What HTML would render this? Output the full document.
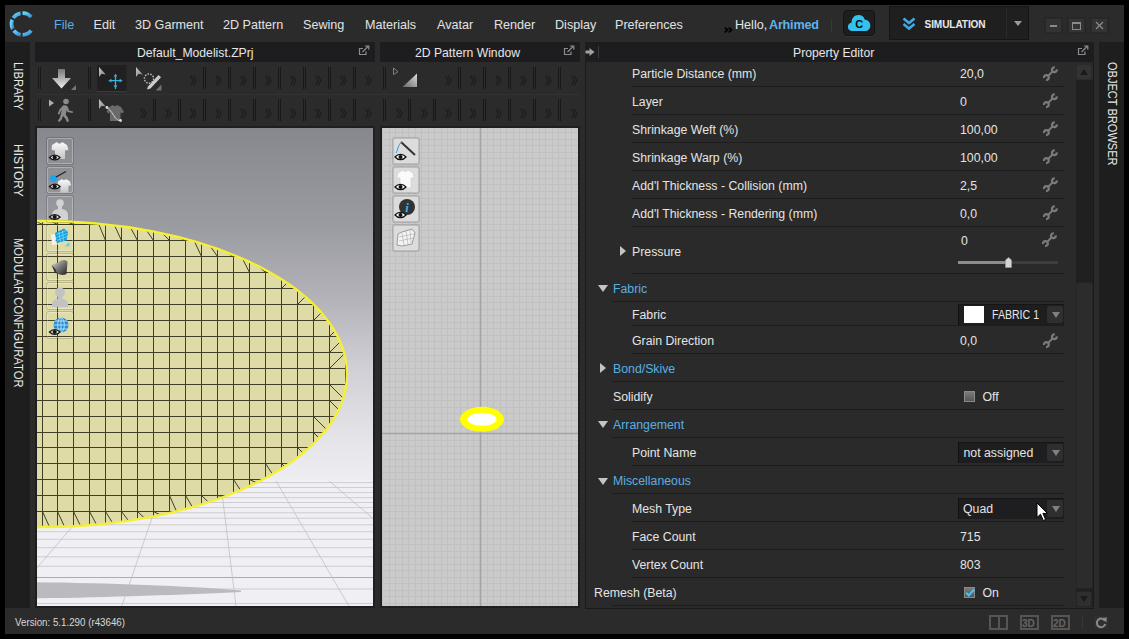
<!DOCTYPE html>
<html><head><meta charset="utf-8">
<style>
*{margin:0;padding:0;box-sizing:border-box}
html,body{width:1129px;height:639px;overflow:hidden;background:#000;font-family:"Liberation Sans",sans-serif;color:#e2e2e2;position:relative}
.a{position:absolute}
.t{white-space:nowrap;line-height:15px}
.vt{position:absolute;transform-origin:0 0;transform:rotate(90deg);font-size:13px;color:#e8e8e8;white-space:nowrap;line-height:14px}
svg{overflow:visible}
</style></head><body>
<div class="a" style="left:5px;top:5px;width:1119px;height:629px;background:#2b2b2b;"></div>
<svg class="a" style="left:9px;top:11px" width="26" height="26" viewBox="0 0 26 26">
<defs><linearGradient id="lg" x1="0" y1="0" x2="1" y2="1"><stop offset="0" stop-color="#6fd3f2"/><stop offset="1" stop-color="#2f8fd6"/></linearGradient></defs>
<g fill="none" stroke="url(#lg)" stroke-width="3.7">
<path d="M13.5 2.2 A10.8 10.8 0 0 1 22.2 6.2"/>
<path d="M11.6 2.3 A10.8 10.8 0 0 0 4.3 7"/>
<path d="M3.3 8.8 A10.8 10.8 0 0 0 3.8 18"/>
<path d="M4.9 19.6 A10.8 10.8 0 0 0 11.7 23.7"/>
<path d="M13.6 23.8 A10.8 10.8 0 0 0 22.2 19.6"/>
</g></svg>
<div class="a t" style="left:54px;top:18px;font-size:12.6px;color:#5aaee3;">File</div>
<div class="a t" style="left:93.5px;top:18px;font-size:12.6px;color:#e2e2e2;">Edit</div>
<div class="a t" style="left:135px;top:18px;font-size:12.6px;color:#e2e2e2;">3D Garment</div>
<div class="a t" style="left:223px;top:18px;font-size:12.6px;color:#e2e2e2;">2D Pattern</div>
<div class="a t" style="left:303px;top:18px;font-size:12.6px;color:#e2e2e2;">Sewing</div>
<div class="a t" style="left:365px;top:18px;font-size:12.6px;color:#e2e2e2;">Materials</div>
<div class="a t" style="left:437px;top:18px;font-size:12.6px;color:#e2e2e2;">Avatar</div>
<div class="a t" style="left:494px;top:18px;font-size:12.6px;color:#e2e2e2;">Render</div>
<div class="a t" style="left:555px;top:18px;font-size:12.6px;color:#e2e2e2;">Display</div>
<div class="a t" style="left:615px;top:18px;font-size:12.6px;color:#e2e2e2;">Preferences</div>
<svg class="a" style="left:724px;top:27px" width="9" height="6" viewBox="0 0 9 6"><path d="M0.8 0.6 L3.6 3 L0.8 5.4 M4.8 0.6 L7.6 3 L4.8 5.4" fill="none" stroke="#000" stroke-width="1.7"/></svg>
<div class="a t" style="left:735px;top:18px;font-size:12.6px;color:#e6e6e6;">Hello,</div>
<div class="a t" style="left:769px;top:18px;font-size:12.6px;color:#5fb3ea;font-weight:bold;letter-spacing:-0.2px">Arhimed</div>
<div class="a" style="left:831px;top:19px;width:1px;height:13px;background:#3a3a3a;"></div>
<div class="a" style="left:843px;top:10px;width:32px;height:26px;background:#1e1e1e;border:1px solid #141414;border-radius:4px;box-shadow:0 1px 0 #333"></div>
<svg class="a" style="left:847px;top:13px" width="24" height="19" viewBox="0 0 24 19">
<path d="M5.5 18 C2 18 0.5 15.5 1 13 C1.5 10.8 3.2 9.8 4.6 9.8 C4.4 5.5 7.2 2 11.5 2 C14.8 2 17 4 17.8 6.8 C21 6.8 23.3 9.3 23.3 12.4 C23.3 15.6 21 18 18 18 Z" fill="#35c1ee"/>
<text x="12.3" y="15" font-family="Liberation Sans" font-weight="bold" font-size="11" text-anchor="middle" fill="#0c0c0c">C</text>
</svg>
<div class="a" style="left:889px;top:6px;width:140px;height:34px;background:#1f1f1f;border:1px solid #161616"></div>
<div class="a" style="left:1006px;top:8px;width:1px;height:30px;background:#2a2a2a;"></div>
<svg class="a" style="left:902px;top:17px" width="14" height="14" viewBox="0 0 14 14">
<path d="M1.5 1.5 L7 6 L12.5 1.5" fill="none" stroke="#3fa9e8" stroke-width="2.6"/>
<path d="M1.5 7 L7 11.5 L12.5 7" fill="none" stroke="#3fa9e8" stroke-width="2.6"/>
</svg>
<div class="a t" style="left:924.5px;top:16.5px;font-size:10.1px;color:#e8e8e8;font-weight:bold;letter-spacing:-0.1px">SIMULATION</div>
<div class="a" style="left:1014px;top:21px;width:0;height:0;border-left:4px solid transparent;border-right:4px solid transparent;border-top:5px solid #9a9a9a"></div>
<div class="a" style="left:1045px;top:18px;width:17px;height:15px;background:#333;border:1px solid #2a2a2a;box-shadow:0 0 0 1px #262626"></div>
<div class="a" style="left:1068px;top:18px;width:17px;height:15px;background:#333;border:1px solid #2a2a2a;box-shadow:0 0 0 1px #262626"></div>
<div class="a" style="left:1091px;top:18px;width:17px;height:15px;background:#333;border:1px solid #2a2a2a;box-shadow:0 0 0 1px #262626"></div>
<div class="a" style="left:1050px;top:25px;width:7px;height:2px;background:#8a8a8a;"></div>
<div class="a" style="left:1072px;top:22px;width:9px;height:8px;border:1px solid #8a8a8a;border-top-width:2px"></div>
<svg class="a" style="left:1095px;top:21px" width="9" height="9" viewBox="0 0 9 9"><path d="M1 1L8 8M8 1L1 8" stroke="#8a8a8a" stroke-width="1.3"/></svg>
<div class="a" style="left:5px;top:42px;width:25px;height:566px;background:#1e1e1e;"></div>
<div class="a vt" style="left:25px;top:62px;transform:rotate(90deg) scale(0.87,1)">LIBRARY</div>
<div class="a vt" style="left:25px;top:144px;transform:rotate(90deg) scale(0.92,1)">HISTORY</div>
<div class="a vt" style="left:25px;top:238px;transform:rotate(90deg) scale(0.865,1)">MODULAR CONFIGURATOR</div>
<div class="a" style="left:1099px;top:42px;width:25px;height:566px;background:#1e1e1e;"></div>
<div class="a vt" style="left:1119px;top:62px;transform:rotate(90deg) scale(0.85,1)">OBJECT BROWSER</div>
<div class="a" style="left:35px;top:42px;width:340px;height:20px;background:#1d1d1f;"></div>
<div class="a t" style="left:137px;top:46px;font-size:12.2px;color:#e6e6e6;">Default_Modelist.ZPrj</div>
<div class="a" style="left:380px;top:42px;width:200px;height:20px;background:#1d1d1f;"></div>
<div class="a t" style="left:415px;top:46px;font-size:12.2px;color:#e6e6e6;">2D Pattern Window</div>
<div class="a" style="left:585px;top:42px;width:509px;height:20px;background:#1d1d1f;"></div>
<div class="a t" style="left:793px;top:46px;font-size:12.2px;color:#e6e6e6;">Property Editor</div>
<svg class="a" style="left:358px;top:45px" width="12" height="11" viewBox="0 0 12 11">
<path d="M5 3.5 H1.5 V9.5 H8 V6.5" fill="none" stroke="#8c8c8c" stroke-width="1.2"/>
<path d="M4.5 7 L10.5 1 M7 1 H10.8 V4.8" fill="none" stroke="#8c8c8c" stroke-width="1.2"/></svg>
<svg class="a" style="left:563px;top:45px" width="12" height="11" viewBox="0 0 12 11">
<path d="M5 3.5 H1.5 V9.5 H8 V6.5" fill="none" stroke="#8c8c8c" stroke-width="1.2"/>
<path d="M4.5 7 L10.5 1 M7 1 H10.8 V4.8" fill="none" stroke="#8c8c8c" stroke-width="1.2"/></svg>
<svg class="a" style="left:1077px;top:45px" width="12" height="11" viewBox="0 0 12 11">
<path d="M5 3.5 H1.5 V9.5 H8 V6.5" fill="none" stroke="#8c8c8c" stroke-width="1.2"/>
<path d="M4.5 7 L10.5 1 M7 1 H10.8 V4.8" fill="none" stroke="#8c8c8c" stroke-width="1.2"/></svg>
<svg class="a" style="left:585px;top:47px" width="11" height="10" viewBox="0 0 11 10"><path d="M0.5 3.5 H4.5 V1 L9.5 5 L4.5 9 V6.5 H0.5Z" fill="#a0a0a0"/></svg>
<div class="a" style="left:598px;top:46px;width:1px;height:12px;background:#3a3a3a;"></div>
<div class="a" style="left:35px;top:94px;width:545px;height:1px;background:#323232;"></div>
<div class="a" style="left:38px;top:67px;width:1px;height:22px;background:#181818"></div>
<div class="a" style="left:40px;top:67px;width:1px;height:22px;background:#181818"></div>
<div class="a" style="left:88px;top:67px;width:1px;height:22px;background:#181818"></div>
<div class="a" style="left:90px;top:67px;width:1px;height:22px;background:#181818"></div>
<div class="a" style="left:203px;top:67px;width:1px;height:22px;background:#181818"></div>
<div class="a" style="left:205px;top:67px;width:1px;height:22px;background:#181818"></div>
<div class="a" style="left:228px;top:67px;width:1px;height:22px;background:#181818"></div>
<div class="a" style="left:230px;top:67px;width:1px;height:22px;background:#181818"></div>
<div class="a" style="left:253px;top:67px;width:1px;height:22px;background:#181818"></div>
<div class="a" style="left:255px;top:67px;width:1px;height:22px;background:#181818"></div>
<div class="a" style="left:278px;top:67px;width:1px;height:22px;background:#181818"></div>
<div class="a" style="left:280px;top:67px;width:1px;height:22px;background:#181818"></div>
<div class="a" style="left:303px;top:67px;width:1px;height:22px;background:#181818"></div>
<div class="a" style="left:305px;top:67px;width:1px;height:22px;background:#181818"></div>
<div class="a" style="left:328px;top:67px;width:1px;height:22px;background:#181818"></div>
<div class="a" style="left:330px;top:67px;width:1px;height:22px;background:#181818"></div>
<div class="a" style="left:353px;top:67px;width:1px;height:22px;background:#181818"></div>
<div class="a" style="left:355px;top:67px;width:1px;height:22px;background:#181818"></div>
<svg class="a" style="left:189.5px;top:75px" width="7" height="11" viewBox="0 0 7 11"><path d="M0.7 0.7 L3.2 5.5 L0.7 10.3 M3.4 0.7 L5.9 5.5 L3.4 10.3" fill="none" stroke="#1c1c1c" stroke-width="1.15"/></svg>
<svg class="a" style="left:214.5px;top:75px" width="7" height="11" viewBox="0 0 7 11"><path d="M0.7 0.7 L3.2 5.5 L0.7 10.3 M3.4 0.7 L5.9 5.5 L3.4 10.3" fill="none" stroke="#1c1c1c" stroke-width="1.15"/></svg>
<svg class="a" style="left:239.5px;top:75px" width="7" height="11" viewBox="0 0 7 11"><path d="M0.7 0.7 L3.2 5.5 L0.7 10.3 M3.4 0.7 L5.9 5.5 L3.4 10.3" fill="none" stroke="#1c1c1c" stroke-width="1.15"/></svg>
<svg class="a" style="left:264.5px;top:75px" width="7" height="11" viewBox="0 0 7 11"><path d="M0.7 0.7 L3.2 5.5 L0.7 10.3 M3.4 0.7 L5.9 5.5 L3.4 10.3" fill="none" stroke="#1c1c1c" stroke-width="1.15"/></svg>
<svg class="a" style="left:289.5px;top:75px" width="7" height="11" viewBox="0 0 7 11"><path d="M0.7 0.7 L3.2 5.5 L0.7 10.3 M3.4 0.7 L5.9 5.5 L3.4 10.3" fill="none" stroke="#1c1c1c" stroke-width="1.15"/></svg>
<svg class="a" style="left:314.5px;top:75px" width="7" height="11" viewBox="0 0 7 11"><path d="M0.7 0.7 L3.2 5.5 L0.7 10.3 M3.4 0.7 L5.9 5.5 L3.4 10.3" fill="none" stroke="#1c1c1c" stroke-width="1.15"/></svg>
<svg class="a" style="left:339.5px;top:75px" width="7" height="11" viewBox="0 0 7 11"><path d="M0.7 0.7 L3.2 5.5 L0.7 10.3 M3.4 0.7 L5.9 5.5 L3.4 10.3" fill="none" stroke="#1c1c1c" stroke-width="1.15"/></svg>
<svg class="a" style="left:364.5px;top:75px" width="7" height="11" viewBox="0 0 7 11"><path d="M0.7 0.7 L3.2 5.5 L0.7 10.3 M3.4 0.7 L5.9 5.5 L3.4 10.3" fill="none" stroke="#1c1c1c" stroke-width="1.15"/></svg>
<div class="a" style="left:38px;top:99px;width:1px;height:22px;background:#181818"></div>
<div class="a" style="left:40px;top:99px;width:1px;height:22px;background:#181818"></div>
<div class="a" style="left:88px;top:99px;width:1px;height:22px;background:#181818"></div>
<div class="a" style="left:90px;top:99px;width:1px;height:22px;background:#181818"></div>
<div class="a" style="left:153px;top:99px;width:1px;height:22px;background:#181818"></div>
<div class="a" style="left:155px;top:99px;width:1px;height:22px;background:#181818"></div>
<div class="a" style="left:178px;top:99px;width:1px;height:22px;background:#181818"></div>
<div class="a" style="left:180px;top:99px;width:1px;height:22px;background:#181818"></div>
<div class="a" style="left:203px;top:99px;width:1px;height:22px;background:#181818"></div>
<div class="a" style="left:205px;top:99px;width:1px;height:22px;background:#181818"></div>
<div class="a" style="left:228px;top:99px;width:1px;height:22px;background:#181818"></div>
<div class="a" style="left:230px;top:99px;width:1px;height:22px;background:#181818"></div>
<div class="a" style="left:253px;top:99px;width:1px;height:22px;background:#181818"></div>
<div class="a" style="left:255px;top:99px;width:1px;height:22px;background:#181818"></div>
<div class="a" style="left:278px;top:99px;width:1px;height:22px;background:#181818"></div>
<div class="a" style="left:280px;top:99px;width:1px;height:22px;background:#181818"></div>
<div class="a" style="left:303px;top:99px;width:1px;height:22px;background:#181818"></div>
<div class="a" style="left:305px;top:99px;width:1px;height:22px;background:#181818"></div>
<div class="a" style="left:328px;top:99px;width:1px;height:22px;background:#181818"></div>
<div class="a" style="left:330px;top:99px;width:1px;height:22px;background:#181818"></div>
<div class="a" style="left:353px;top:99px;width:1px;height:22px;background:#181818"></div>
<div class="a" style="left:355px;top:99px;width:1px;height:22px;background:#181818"></div>
<svg class="a" style="left:140px;top:108px" width="7" height="11" viewBox="0 0 7 11"><path d="M0.7 0.7 L3.2 5.5 L0.7 10.3 M3.4 0.7 L5.9 5.5 L3.4 10.3" fill="none" stroke="#1c1c1c" stroke-width="1.15"/></svg>
<svg class="a" style="left:165px;top:108px" width="7" height="11" viewBox="0 0 7 11"><path d="M0.7 0.7 L3.2 5.5 L0.7 10.3 M3.4 0.7 L5.9 5.5 L3.4 10.3" fill="none" stroke="#1c1c1c" stroke-width="1.15"/></svg>
<svg class="a" style="left:189.5px;top:108px" width="7" height="11" viewBox="0 0 7 11"><path d="M0.7 0.7 L3.2 5.5 L0.7 10.3 M3.4 0.7 L5.9 5.5 L3.4 10.3" fill="none" stroke="#1c1c1c" stroke-width="1.15"/></svg>
<svg class="a" style="left:214.5px;top:108px" width="7" height="11" viewBox="0 0 7 11"><path d="M0.7 0.7 L3.2 5.5 L0.7 10.3 M3.4 0.7 L5.9 5.5 L3.4 10.3" fill="none" stroke="#1c1c1c" stroke-width="1.15"/></svg>
<svg class="a" style="left:239.5px;top:108px" width="7" height="11" viewBox="0 0 7 11"><path d="M0.7 0.7 L3.2 5.5 L0.7 10.3 M3.4 0.7 L5.9 5.5 L3.4 10.3" fill="none" stroke="#1c1c1c" stroke-width="1.15"/></svg>
<svg class="a" style="left:264.5px;top:108px" width="7" height="11" viewBox="0 0 7 11"><path d="M0.7 0.7 L3.2 5.5 L0.7 10.3 M3.4 0.7 L5.9 5.5 L3.4 10.3" fill="none" stroke="#1c1c1c" stroke-width="1.15"/></svg>
<svg class="a" style="left:289.5px;top:108px" width="7" height="11" viewBox="0 0 7 11"><path d="M0.7 0.7 L3.2 5.5 L0.7 10.3 M3.4 0.7 L5.9 5.5 L3.4 10.3" fill="none" stroke="#1c1c1c" stroke-width="1.15"/></svg>
<svg class="a" style="left:314.5px;top:108px" width="7" height="11" viewBox="0 0 7 11"><path d="M0.7 0.7 L3.2 5.5 L0.7 10.3 M3.4 0.7 L5.9 5.5 L3.4 10.3" fill="none" stroke="#1c1c1c" stroke-width="1.15"/></svg>
<svg class="a" style="left:339.5px;top:108px" width="7" height="11" viewBox="0 0 7 11"><path d="M0.7 0.7 L3.2 5.5 L0.7 10.3 M3.4 0.7 L5.9 5.5 L3.4 10.3" fill="none" stroke="#1c1c1c" stroke-width="1.15"/></svg>
<svg class="a" style="left:364.5px;top:108px" width="7" height="11" viewBox="0 0 7 11"><path d="M0.7 0.7 L3.2 5.5 L0.7 10.3 M3.4 0.7 L5.9 5.5 L3.4 10.3" fill="none" stroke="#1c1c1c" stroke-width="1.15"/></svg>
<div class="a" style="left:383px;top:67px;width:1px;height:22px;background:#181818"></div>
<div class="a" style="left:385px;top:67px;width:1px;height:22px;background:#181818"></div>
<div class="a" style="left:458px;top:67px;width:1px;height:22px;background:#181818"></div>
<div class="a" style="left:460px;top:67px;width:1px;height:22px;background:#181818"></div>
<div class="a" style="left:483px;top:67px;width:1px;height:22px;background:#181818"></div>
<div class="a" style="left:485px;top:67px;width:1px;height:22px;background:#181818"></div>
<div class="a" style="left:508px;top:67px;width:1px;height:22px;background:#181818"></div>
<div class="a" style="left:510px;top:67px;width:1px;height:22px;background:#181818"></div>
<div class="a" style="left:533px;top:67px;width:1px;height:22px;background:#181818"></div>
<div class="a" style="left:535px;top:67px;width:1px;height:22px;background:#181818"></div>
<div class="a" style="left:558px;top:67px;width:1px;height:22px;background:#181818"></div>
<div class="a" style="left:560px;top:67px;width:1px;height:22px;background:#181818"></div>
<svg class="a" style="left:445px;top:75px" width="7" height="11" viewBox="0 0 7 11"><path d="M0.7 0.7 L3.2 5.5 L0.7 10.3 M3.4 0.7 L5.9 5.5 L3.4 10.3" fill="none" stroke="#1c1c1c" stroke-width="1.15"/></svg>
<svg class="a" style="left:470px;top:75px" width="7" height="11" viewBox="0 0 7 11"><path d="M0.7 0.7 L3.2 5.5 L0.7 10.3 M3.4 0.7 L5.9 5.5 L3.4 10.3" fill="none" stroke="#1c1c1c" stroke-width="1.15"/></svg>
<svg class="a" style="left:495px;top:75px" width="7" height="11" viewBox="0 0 7 11"><path d="M0.7 0.7 L3.2 5.5 L0.7 10.3 M3.4 0.7 L5.9 5.5 L3.4 10.3" fill="none" stroke="#1c1c1c" stroke-width="1.15"/></svg>
<svg class="a" style="left:520px;top:75px" width="7" height="11" viewBox="0 0 7 11"><path d="M0.7 0.7 L3.2 5.5 L0.7 10.3 M3.4 0.7 L5.9 5.5 L3.4 10.3" fill="none" stroke="#1c1c1c" stroke-width="1.15"/></svg>
<svg class="a" style="left:545px;top:75px" width="7" height="11" viewBox="0 0 7 11"><path d="M0.7 0.7 L3.2 5.5 L0.7 10.3 M3.4 0.7 L5.9 5.5 L3.4 10.3" fill="none" stroke="#1c1c1c" stroke-width="1.15"/></svg>
<svg class="a" style="left:570.5px;top:75px" width="7" height="11" viewBox="0 0 7 11"><path d="M0.7 0.7 L3.2 5.5 L0.7 10.3 M3.4 0.7 L5.9 5.5 L3.4 10.3" fill="none" stroke="#1c1c1c" stroke-width="1.15"/></svg>
<div class="a" style="left:383px;top:99px;width:1px;height:22px;background:#181818"></div>
<div class="a" style="left:385px;top:99px;width:1px;height:22px;background:#181818"></div>
<div class="a" style="left:408px;top:99px;width:1px;height:22px;background:#181818"></div>
<div class="a" style="left:410px;top:99px;width:1px;height:22px;background:#181818"></div>
<div class="a" style="left:433px;top:99px;width:1px;height:22px;background:#181818"></div>
<div class="a" style="left:435px;top:99px;width:1px;height:22px;background:#181818"></div>
<div class="a" style="left:458px;top:99px;width:1px;height:22px;background:#181818"></div>
<div class="a" style="left:460px;top:99px;width:1px;height:22px;background:#181818"></div>
<div class="a" style="left:483px;top:99px;width:1px;height:22px;background:#181818"></div>
<div class="a" style="left:485px;top:99px;width:1px;height:22px;background:#181818"></div>
<div class="a" style="left:508px;top:99px;width:1px;height:22px;background:#181818"></div>
<div class="a" style="left:510px;top:99px;width:1px;height:22px;background:#181818"></div>
<div class="a" style="left:533px;top:99px;width:1px;height:22px;background:#181818"></div>
<div class="a" style="left:535px;top:99px;width:1px;height:22px;background:#181818"></div>
<div class="a" style="left:558px;top:99px;width:1px;height:22px;background:#181818"></div>
<div class="a" style="left:560px;top:99px;width:1px;height:22px;background:#181818"></div>
<svg class="a" style="left:395.5px;top:108px" width="7" height="11" viewBox="0 0 7 11"><path d="M0.7 0.7 L3.2 5.5 L0.7 10.3 M3.4 0.7 L5.9 5.5 L3.4 10.3" fill="none" stroke="#1c1c1c" stroke-width="1.15"/></svg>
<svg class="a" style="left:420.5px;top:108px" width="7" height="11" viewBox="0 0 7 11"><path d="M0.7 0.7 L3.2 5.5 L0.7 10.3 M3.4 0.7 L5.9 5.5 L3.4 10.3" fill="none" stroke="#1c1c1c" stroke-width="1.15"/></svg>
<svg class="a" style="left:445px;top:108px" width="7" height="11" viewBox="0 0 7 11"><path d="M0.7 0.7 L3.2 5.5 L0.7 10.3 M3.4 0.7 L5.9 5.5 L3.4 10.3" fill="none" stroke="#1c1c1c" stroke-width="1.15"/></svg>
<svg class="a" style="left:470px;top:108px" width="7" height="11" viewBox="0 0 7 11"><path d="M0.7 0.7 L3.2 5.5 L0.7 10.3 M3.4 0.7 L5.9 5.5 L3.4 10.3" fill="none" stroke="#1c1c1c" stroke-width="1.15"/></svg>
<svg class="a" style="left:495px;top:108px" width="7" height="11" viewBox="0 0 7 11"><path d="M0.7 0.7 L3.2 5.5 L0.7 10.3 M3.4 0.7 L5.9 5.5 L3.4 10.3" fill="none" stroke="#1c1c1c" stroke-width="1.15"/></svg>
<svg class="a" style="left:520px;top:108px" width="7" height="11" viewBox="0 0 7 11"><path d="M0.7 0.7 L3.2 5.5 L0.7 10.3 M3.4 0.7 L5.9 5.5 L3.4 10.3" fill="none" stroke="#1c1c1c" stroke-width="1.15"/></svg>
<svg class="a" style="left:545px;top:108px" width="7" height="11" viewBox="0 0 7 11"><path d="M0.7 0.7 L3.2 5.5 L0.7 10.3 M3.4 0.7 L5.9 5.5 L3.4 10.3" fill="none" stroke="#1c1c1c" stroke-width="1.15"/></svg>
<svg class="a" style="left:570.5px;top:108px" width="7" height="11" viewBox="0 0 7 11"><path d="M0.7 0.7 L3.2 5.5 L0.7 10.3 M3.4 0.7 L5.9 5.5 L3.4 10.3" fill="none" stroke="#1c1c1c" stroke-width="1.15"/></svg>
<svg class="a" style="left:52px;top:69px" width="26" height="21" viewBox="0 0 26 21">
<defs><linearGradient id="dg" x1="0" y1="0" x2="0" y2="1"><stop offset="0" stop-color="#777"/><stop offset="1" stop-color="#f0f0f0"/></linearGradient></defs>
<path d="M6 0 H13 V9 H19 L9.5 19.5 L0 9 H6Z" fill="url(#dg)"/>
<path d="M24 16 V21 H19Z" fill="#777"/></svg>
<div class="a" style="left:97px;top:65px;width:30px;height:27px;background:#202020;border-bottom:1px solid #3a3a3a;border-right:1px solid #262626"></div>
<svg class="a" style="left:97px;top:66px" width="30" height="25" viewBox="0 0 30 25"><defs><linearGradient id="cg" x1="0" y1="0" x2="1" y2="1"><stop offset="0" stop-color="#c8c8c8"/><stop offset="1" stop-color="#808080"/></linearGradient></defs><path d="M2 1 V11 L4.6 7.8 L8.8 8.4Z" fill="url(#cg)"/>
<g stroke="#3ab0e2" stroke-width="1.3" fill="#3ab0e2">
<path d="M18.5 9.5 V23 M11.8 14.6 H25.2" fill="none"/>
<path d="M18.5 7.8 L16.6 10.6 H20.4Z M18.5 22.2 L16.6 19.4 H20.4Z M11.6 14.6 L14.4 12.7 V16.5Z M25.4 14.6 L22.6 12.7 V16.5Z" stroke="none"/>
</g></svg>
<svg class="a" style="left:135px;top:66px" width="30" height="25" viewBox="0 0 30 25"><path d="M1 1 V11 L3.6 7.8 L7.8 8.4Z" fill="url(#cg)"/>
<circle cx="14" cy="12.6" r="4.6" fill="none" stroke="#b8b8b8" stroke-width="1.4" stroke-dasharray="1.5 1.3"/>
<path d="M13 20.5 L23.5 9 L26 11.3 L15.5 22.5 L12 23.5Z" fill="#cdcdcd"/>
<path d="M26.5 18.5 V24.5 H20.5Z" fill="#707070"/></svg>
<svg class="a" style="left:48px;top:98px" width="28" height="25" viewBox="0 0 28 25">
<path d="M1 1.5 L1 8.5 L6 5Z" fill="#b0b0b0"/>
<circle cx="18" cy="3.5" r="2.8" fill="#8a8a8a"/>
<path d="M15 7.5 C17 7 19.5 7.5 20 9.5 L21 12.5 L25 13.5 L24.6 15 L19.6 14 L18.7 12.2 L17.7 16.5 L20 20 L21 23.5 L18.8 24 L17.5 20.8 L15 18 L13.5 22 L11 24 L9.8 22.8 L12 19.5 L13.8 12 L12.8 13.2 L11.5 16.5 L9.6 16 L11.5 11.5Z" fill="#8a8a8a"/>
</svg>
<svg class="a" style="left:98px;top:99px" width="28" height="25" viewBox="0 0 28 25"><path d="M1 0 V10 L3.6 6.8 L7.8 7.4Z" fill="url(#cg)"/>
<path d="M11 8 L15 6 C16 7.5 18 7.5 19 6 L23 8 L26 13 L23.5 14.5 L22.5 13 V22 H12 V13 L11 14.5 L8.5 13Z" fill="#6a6a6a"/>
<path d="M9 8.5 C13 11 15 16 17.5 19 C19 21 21 21.5 22 21.5" fill="none" stroke="#cfcfcf" stroke-width="1"/>
<circle cx="9" cy="8.5" r="1.4" fill="#ddd"/><circle cx="22.5" cy="21.5" r="1.4" fill="#ddd"/>
</svg>
<svg class="a" style="left:392px;top:67px" width="28" height="22" viewBox="0 0 28 22">
<path d="M1.5 1 L1.5 7.5 L6 4.8Z" fill="none" stroke="#888" stroke-width="0.9"/>
<defs><linearGradient id="tg" x1="1" y1="0" x2="0" y2="1"><stop offset="0" stop-color="#ddd"/><stop offset="1" stop-color="#666"/></linearGradient></defs>
<path d="M25 6.5 V20 H10.5Z" fill="url(#tg)"/></svg>
<div class="a" style="left:35px;top:126px;width:340px;height:482px;background:#1f1f1f;"></div>
<svg class="a" style="left:37px;top:128px;overflow:hidden" width="336" height="478" viewBox="0 0 336 478"><defs>
<linearGradient id="bg3" x1="0" y1="0" x2="0" y2="1">
<stop offset="0" stop-color="#87888d"/>
<stop offset="0.2" stop-color="#9a9ba0"/>
<stop offset="0.36" stop-color="#b3b3b9"/>
<stop offset="0.5" stop-color="#cfcfd5"/>
<stop offset="0.67" stop-color="#e7e7eb"/>
<stop offset="0.74" stop-color="#eeeef2"/>
<stop offset="1" stop-color="#f2f2f6"/>
</linearGradient>
<clipPath id="ec"><ellipse cx="5" cy="246" rx="305" ry="153"/></clipPath>
</defs><rect width="336" height="478" fill="url(#bg3)"/><rect x="0" y="352" width="336" height="126" fill="#f0f0f4"/><line x1="0" y1="354.6" x2="336" y2="354.6" stroke="#c4c4c9" stroke-width="0.8"/><line x1="0" y1="359.5" x2="336" y2="359.5" stroke="#c4c4c9" stroke-width="0.8"/><line x1="0" y1="364.6" x2="336" y2="364.6" stroke="#c4c4c9" stroke-width="0.8"/><line x1="0" y1="369.7" x2="336" y2="369.7" stroke="#c4c4c9" stroke-width="0.8"/><line x1="0" y1="374.5" x2="336" y2="374.5" stroke="#c4c4c9" stroke-width="0.8"/><line x1="0" y1="379.6" x2="336" y2="379.6" stroke="#c4c4c9" stroke-width="0.8"/><line x1="0" y1="384.8" x2="336" y2="384.8" stroke="#c4c4c9" stroke-width="0.8"/><line x1="0" y1="390.2" x2="336" y2="390.2" stroke="#c4c4c9" stroke-width="0.8"/><line x1="0" y1="396.8" x2="336" y2="396.8" stroke="#c4c4c9" stroke-width="0.8"/><line x1="0" y1="403.7" x2="336" y2="403.7" stroke="#c4c4c9" stroke-width="0.8"/><line x1="0" y1="411.3" x2="336" y2="411.3" stroke="#c4c4c9" stroke-width="0.8"/><line x1="0" y1="419.7" x2="336" y2="419.7" stroke="#c4c4c9" stroke-width="0.8"/><line x1="0" y1="428.8" x2="336" y2="428.8" stroke="#c4c4c9" stroke-width="0.8"/><line x1="0" y1="438.3" x2="336" y2="438.3" stroke="#c4c4c9" stroke-width="0.8"/><line x1="0" y1="449.5" x2="336" y2="449.5" stroke="#ababb0" stroke-width="1.1"/><line x1="0" y1="461.0" x2="336" y2="461.0" stroke="#c4c4c9" stroke-width="0.8"/><line x1="0" y1="475.5" x2="336" y2="475.5" stroke="#c4c4c9" stroke-width="0.8"/><line x1="74.4" y1="353" x2="-32.7" y2="478" stroke="#c0c0c5" stroke-width="0.8"/><line x1="127.7" y1="353" x2="84.8" y2="478" stroke="#c0c0c5" stroke-width="0.8"/><line x1="183.5" y1="353" x2="199.0" y2="478" stroke="#c0c0c5" stroke-width="0.8"/><line x1="239.1" y1="353" x2="311.9" y2="478" stroke="#c0c0c5" stroke-width="0.8"/><line x1="292.2" y1="353" x2="438.1" y2="478" stroke="#c0c0c5" stroke-width="0.8"/><line x1="345.4" y1="353" x2="564.1" y2="478" stroke="#c0c0c5" stroke-width="0.8"/><path d="M0 454.29999999999995 C70 455 150 458 204 462.5 L204 464 C150 466.5 70 469.5 0 470.29999999999995Z" fill="#bababf"/><ellipse cx="5" cy="246" rx="305" ry="153" fill="#dedba7"/><g clip-path="url(#ec)" stroke="#404026" stroke-width="1"><line x1="5.5" y1="0" x2="5.5" y2="478"/><line x1="20.5" y1="0" x2="20.5" y2="478"/><line x1="36.5" y1="0" x2="36.5" y2="478"/><line x1="52.5" y1="0" x2="52.5" y2="478"/><line x1="68.5" y1="0" x2="68.5" y2="478"/><line x1="84.5" y1="0" x2="84.5" y2="478"/><line x1="100.5" y1="0" x2="100.5" y2="478"/><line x1="116.5" y1="0" x2="116.5" y2="478"/><line x1="132.5" y1="0" x2="132.5" y2="478"/><line x1="148.5" y1="0" x2="148.5" y2="478"/><line x1="164.5" y1="0" x2="164.5" y2="478"/><line x1="180.5" y1="0" x2="180.5" y2="478"/><line x1="196.5" y1="0" x2="196.5" y2="478"/><line x1="212.5" y1="0" x2="212.5" y2="478"/><line x1="228.5" y1="0" x2="228.5" y2="478"/><line x1="244.5" y1="0" x2="244.5" y2="478"/><line x1="260.5" y1="0" x2="260.5" y2="478"/><line x1="276.5" y1="0" x2="276.5" y2="478"/><line x1="292.5" y1="0" x2="292.5" y2="478"/><line x1="308.5" y1="0" x2="308.5" y2="478"/><line x1="324.5" y1="0" x2="324.5" y2="478"/><line x1="0" y1="80.5" x2="336" y2="80.5"/><line x1="0" y1="96.5" x2="336" y2="96.5"/><line x1="0" y1="112.5" x2="336" y2="112.5"/><line x1="0" y1="128.5" x2="336" y2="128.5"/><line x1="0" y1="144.5" x2="336" y2="144.5"/><line x1="0" y1="160.5" x2="336" y2="160.5"/><line x1="0" y1="176.5" x2="336" y2="176.5"/><line x1="0" y1="192.5" x2="336" y2="192.5"/><line x1="0" y1="208.5" x2="336" y2="208.5"/><line x1="0" y1="224.5" x2="336" y2="224.5"/><line x1="0" y1="240.5" x2="336" y2="240.5"/><line x1="0" y1="256.5" x2="336" y2="256.5"/><line x1="0" y1="272.5" x2="336" y2="272.5"/><line x1="0" y1="288.5" x2="336" y2="288.5"/><line x1="0" y1="304.5" x2="336" y2="304.5"/><line x1="0" y1="319.5" x2="336" y2="319.5"/><line x1="0" y1="335.5" x2="336" y2="335.5"/><line x1="0" y1="351.5" x2="336" y2="351.5"/><line x1="0" y1="367.5" x2="336" y2="367.5"/><line x1="0" y1="383.5" x2="336" y2="383.5"/><line x1="0" y1="399.5" x2="336" y2="399.5"/><path d="M-1.5 93.0 L5.5 96.5"/><path d="M5.5 383.5 L12.5 399.0"/><path d="M13.5 93.1 L20.5 96.5"/><path d="M20.5 383.5 L27.5 398.6"/><path d="M29.5 93.5 L36.5 96.5"/><path d="M36.5 383.5 L43.5 397.8"/><path d="M45.5 94.4 L52.5 96.5"/><path d="M52.5 383.5 L59.5 396.5"/><path d="M61.5 95.6 L68.5 112.5"/><path d="M68.5 383.5 L75.5 394.9"/><path d="M77.5 97.4 L84.5 112.5"/><path d="M84.5 383.5 L91.5 392.7"/><path d="M93.5 99.6 L100.5 112.5"/><path d="M100.5 383.5 L107.5 390.1"/><path d="M109.5 102.3 L116.5 112.5"/><path d="M116.5 383.5 L123.5 387.0"/><path d="M125.5 105.4 L132.5 112.5"/><path d="M132.5 367.5 L139.5 383.3"/><path d="M141.5 109.2 L148.5 112.5"/><path d="M148.5 367.5 L155.5 379.1"/><path d="M157.5 113.5 L164.5 128.5"/><path d="M164.5 367.5 L171.5 374.2"/><path d="M173.5 118.5 L180.5 128.5"/><path d="M180.5 367.5 L187.5 368.6"/><path d="M189.5 124.2 L196.5 128.5"/><path d="M196.5 351.5 L203.5 362.2"/><path d="M205.5 130.7 L212.5 144.5"/><path d="M212.5 351.5 L219.5 354.8"/><path d="M221.5 138.2 L228.5 144.5"/><path d="M228.5 335.5 L235.5 346.2"/><path d="M244.5 160.5 L250.1 154.9"/><path d="M260.5 176.5 L268.3 168.7"/><path d="M276.5 192.5 L284.4 184.6"/><path d="M292.5 208.5 L297.8 203.2"/><path d="M292.5 224.5 L303.2 213.8"/><path d="M292.5 240.5 L307.3 225.7"/><path d="M292.5 256.5 L306.2 270.2"/><path d="M292.5 272.5 L301.6 281.6"/><path d="M276.5 288.5 L289.3 301.3"/><path d="M276.5 304.5 L282.0 310.0"/><path d="M260.5 319.5 L266.1 325.1"/><path d="M244.5 335.5 L247.7 338.7"/></g><ellipse cx="5" cy="246" rx="305" ry="153" fill="none" stroke="#f6f032" stroke-width="2.3"/></svg>
<div class="a" style="left:47px;top:138px;width:26px;height:26px;border:1px solid rgba(255,255,255,0.28);box-shadow:0 0 0 1px rgba(0,0,0,0.16);border-radius:2px"></div>
<svg class="a" style="left:47px;top:138px" width="26" height="26" viewBox="0 0 26 26"><defs><linearGradient id="shg" x1="0" y1="0" x2="0" y2="1"><stop offset="0" stop-color="#fafafa"/><stop offset="1" stop-color="#c4c4c4"/></linearGradient><linearGradient id="shoe" x1="0" y1="0" x2="1" y2="1"><stop offset="0" stop-color="#e0e0e0"/><stop offset="0.5" stop-color="#777"/><stop offset="1" stop-color="#222"/></linearGradient></defs><g transform="translate(5,4) scale(1.0)"><path d="M0 3 L5 0 C6 2 9 2 10 0 L15 3 L16.5 8 L13 8.5 V17 H3 V8.5 L-0.5 8Z" fill="url(#shg)"/></g><path d="M2.5 19.5 C5.5 16.3 10.0 16.3 13.0 19.5 C10.0 22.7 5.5 22.7 2.5 19.5Z" fill="#e8e8e8" stroke="#151515" stroke-width="1.3"/><circle cx="7.7" cy="19.5" r="2.1" fill="#151515"/></svg>
<div class="a" style="left:47px;top:167px;width:26px;height:26px;border:1px solid rgba(255,255,255,0.28);box-shadow:0 0 0 1px rgba(0,0,0,0.16);border-radius:2px"></div>
<svg class="a" style="left:47px;top:167px" width="26" height="26" viewBox="0 0 26 26"><circle cx="6.5" cy="11.5" r="3.6" fill="#20a4ea"/><path d="M9 10 L19 4.5" stroke="#222" stroke-width="1.4"/><g transform="translate(11,12) scale(0.8)"><path d="M0 3 L5 0 C6 2 9 2 10 0 L15 3 L16.5 8 L13 8.5 V17 H3 V8.5 L-0.5 8Z" fill="url(#shg)"/></g><path d="M2.5 19.5 C5.5 16.3 10.0 16.3 13.0 19.5 C10.0 22.7 5.5 22.7 2.5 19.5Z" fill="#e8e8e8" stroke="#151515" stroke-width="1.3"/><circle cx="7.7" cy="19.5" r="2.1" fill="#151515"/></svg>
<div class="a" style="left:47px;top:196px;width:26px;height:26px;border:1px solid rgba(255,255,255,0.28);box-shadow:0 0 0 1px rgba(0,0,0,0.16);border-radius:2px"></div>
<svg class="a" style="left:47px;top:196px" width="26" height="26" viewBox="0 0 26 26"><circle cx="13" cy="7" r="3.8" fill="#d2d2d2"/><path d="M11 10 H15 V13 C19 13.5 21 15.5 21 19 V24 H5 V19 C5 15.5 7 13.5 11 13Z" fill="#d2d2d2"/><path d="M2.5 21 C5.5 17.8 10.0 17.8 13.0 21 C10.0 24.2 5.5 24.2 2.5 21Z" fill="#e8e8e8" stroke="#151515" stroke-width="1.3"/><circle cx="7.7" cy="21" r="2.1" fill="#151515"/></svg>
<div class="a" style="left:47px;top:225px;width:26px;height:26px;border:1px solid rgba(255,255,255,0.28);box-shadow:0 0 0 1px rgba(0,0,0,0.16);border-radius:2px"></div>
<svg class="a" style="left:47px;top:225px" width="26" height="26" viewBox="0 0 26 26"><path d="M4 9.5 L8 9 L9 18 L14 19 L5 20Z" fill="#f2f2f2"/><path d="M8 8 L17 3.5 L21 7 L19.5 15.5 L10 18Z" fill="#13a0df"/><path d="M9.5 9.5 L19.5 5.5 M9.5 12.5 L20 8.5 M9.8 15.5 L19.8 11.5 M12 7 L13.5 17.5 M15.5 5.5 L16.5 16.5" stroke="#8fdcff" stroke-width="0.7"/><path d="M18 21.5 L22 17 L22.5 21Z" fill="#56cdf3"/></svg>
<div class="a" style="left:47px;top:254px;width:26px;height:26px;border:1px solid rgba(255,255,255,0.28);box-shadow:0 0 0 1px rgba(0,0,0,0.16);border-radius:2px"></div>
<svg class="a" style="left:47px;top:254px" width="26" height="26" viewBox="0 0 26 26"><defs><linearGradient id="shg" x1="0" y1="0" x2="0" y2="1"><stop offset="0" stop-color="#fafafa"/><stop offset="1" stop-color="#c4c4c4"/></linearGradient><linearGradient id="shoe" x1="0" y1="0" x2="1" y2="1"><stop offset="0" stop-color="#e0e0e0"/><stop offset="0.5" stop-color="#777"/><stop offset="1" stop-color="#222"/></linearGradient></defs><path d="M4.5 11 L11 8.5 C14 5.5 19 5 20.5 8 L19.5 20 C16.5 21.5 12.5 21 10.5 19.5 L8.5 15 Z" fill="url(#shoe)"/><path d="M4.5 11 L8.5 15 L10.5 19.5 L8 19 Z" fill="#333"/></svg>
<div class="a" style="left:47px;top:283px;width:26px;height:26px;border:1px solid rgba(255,255,255,0.28);box-shadow:0 0 0 1px rgba(0,0,0,0.16);border-radius:2px"></div>
<svg class="a" style="left:47px;top:283px" width="26" height="26" viewBox="0 0 26 26"><circle cx="13" cy="9.5" r="5" fill="#c2c2c2"/><path d="M10.5 13 H15.5 V16 C19 16.5 21 18 21 21 V24 H5 V21 C5 18 7 16.5 10.5 16Z" fill="#c2c2c2"/></svg>
<div class="a" style="left:47px;top:312px;width:26px;height:26px;border:1px solid rgba(255,255,255,0.28);box-shadow:0 0 0 1px rgba(0,0,0,0.16);border-radius:2px"></div>
<svg class="a" style="left:47px;top:312px" width="26" height="26" viewBox="0 0 26 26"><circle cx="14" cy="13" r="7.5" fill="#2a8cd0"/><g stroke="#c8ecff" stroke-width="0.8" fill="none"><ellipse cx="14" cy="13" rx="3.3" ry="7.5"/><path d="M6.5 13 H21.5 M7.5 9 H20.5 M7.5 17 H20.5 M14 5.5 V20.5"/></g><path d="M2.5 20 C5.5 16.8 10.0 16.8 13.0 20 C10.0 23.2 5.5 23.2 2.5 20Z" fill="#e8e8e8" stroke="#151515" stroke-width="1.3"/><circle cx="7.7" cy="20" r="2.1" fill="#151515"/></svg>
<div class="a" style="left:380px;top:126px;width:200px;height:482px;background:#1f1f1f;"></div>
<svg class="a" style="left:382px;top:128px;overflow:hidden" width="196" height="478" viewBox="0 0 196 478"><rect width="196" height="478" fill="#cacaca"/><g stroke="#c0c0c0" stroke-width="1"><line x1="0.5" y1="0" x2="0.5" y2="478"/><line x1="7.5" y1="0" x2="7.5" y2="478"/><line x1="13.5" y1="0" x2="13.5" y2="478"/><line x1="20.5" y1="0" x2="20.5" y2="478"/><line x1="26.5" y1="0" x2="26.5" y2="478"/><line x1="33.5" y1="0" x2="33.5" y2="478"/><line x1="39.5" y1="0" x2="39.5" y2="478"/><line x1="46.5" y1="0" x2="46.5" y2="478"/><line x1="52.5" y1="0" x2="52.5" y2="478"/><line x1="59.5" y1="0" x2="59.5" y2="478"/><line x1="65.5" y1="0" x2="65.5" y2="478"/><line x1="72.5" y1="0" x2="72.5" y2="478"/><line x1="78.5" y1="0" x2="78.5" y2="478"/><line x1="85.5" y1="0" x2="85.5" y2="478"/><line x1="91.5" y1="0" x2="91.5" y2="478"/><line x1="98.5" y1="0" x2="98.5" y2="478"/><line x1="105.5" y1="0" x2="105.5" y2="478"/><line x1="111.5" y1="0" x2="111.5" y2="478"/><line x1="118.5" y1="0" x2="118.5" y2="478"/><line x1="124.5" y1="0" x2="124.5" y2="478"/><line x1="131.5" y1="0" x2="131.5" y2="478"/><line x1="137.5" y1="0" x2="137.5" y2="478"/><line x1="144.5" y1="0" x2="144.5" y2="478"/><line x1="150.5" y1="0" x2="150.5" y2="478"/><line x1="157.5" y1="0" x2="157.5" y2="478"/><line x1="163.5" y1="0" x2="163.5" y2="478"/><line x1="170.5" y1="0" x2="170.5" y2="478"/><line x1="176.5" y1="0" x2="176.5" y2="478"/><line x1="183.5" y1="0" x2="183.5" y2="478"/><line x1="189.5" y1="0" x2="189.5" y2="478"/><line x1="0" y1="4.5" x2="196" y2="4.5"/><line x1="0" y1="11.5" x2="196" y2="11.5"/><line x1="0" y1="17.5" x2="196" y2="17.5"/><line x1="0" y1="24.5" x2="196" y2="24.5"/><line x1="0" y1="30.5" x2="196" y2="30.5"/><line x1="0" y1="37.5" x2="196" y2="37.5"/><line x1="0" y1="43.5" x2="196" y2="43.5"/><line x1="0" y1="50.5" x2="196" y2="50.5"/><line x1="0" y1="56.5" x2="196" y2="56.5"/><line x1="0" y1="63.5" x2="196" y2="63.5"/><line x1="0" y1="70.5" x2="196" y2="70.5"/><line x1="0" y1="76.5" x2="196" y2="76.5"/><line x1="0" y1="83.5" x2="196" y2="83.5"/><line x1="0" y1="89.5" x2="196" y2="89.5"/><line x1="0" y1="96.5" x2="196" y2="96.5"/><line x1="0" y1="102.5" x2="196" y2="102.5"/><line x1="0" y1="109.5" x2="196" y2="109.5"/><line x1="0" y1="115.5" x2="196" y2="115.5"/><line x1="0" y1="122.5" x2="196" y2="122.5"/><line x1="0" y1="128.5" x2="196" y2="128.5"/><line x1="0" y1="135.5" x2="196" y2="135.5"/><line x1="0" y1="142.5" x2="196" y2="142.5"/><line x1="0" y1="148.5" x2="196" y2="148.5"/><line x1="0" y1="155.5" x2="196" y2="155.5"/><line x1="0" y1="161.5" x2="196" y2="161.5"/><line x1="0" y1="168.5" x2="196" y2="168.5"/><line x1="0" y1="174.5" x2="196" y2="174.5"/><line x1="0" y1="181.5" x2="196" y2="181.5"/><line x1="0" y1="187.5" x2="196" y2="187.5"/><line x1="0" y1="194.5" x2="196" y2="194.5"/><line x1="0" y1="200.5" x2="196" y2="200.5"/><line x1="0" y1="207.5" x2="196" y2="207.5"/><line x1="0" y1="213.5" x2="196" y2="213.5"/><line x1="0" y1="220.5" x2="196" y2="220.5"/><line x1="0" y1="227.5" x2="196" y2="227.5"/><line x1="0" y1="233.5" x2="196" y2="233.5"/><line x1="0" y1="240.5" x2="196" y2="240.5"/><line x1="0" y1="246.5" x2="196" y2="246.5"/><line x1="0" y1="253.5" x2="196" y2="253.5"/><line x1="0" y1="259.5" x2="196" y2="259.5"/><line x1="0" y1="266.5" x2="196" y2="266.5"/><line x1="0" y1="272.5" x2="196" y2="272.5"/><line x1="0" y1="279.5" x2="196" y2="279.5"/><line x1="0" y1="285.5" x2="196" y2="285.5"/><line x1="0" y1="292.5" x2="196" y2="292.5"/><line x1="0" y1="298.5" x2="196" y2="298.5"/><line x1="0" y1="305.5" x2="196" y2="305.5"/><line x1="0" y1="312.5" x2="196" y2="312.5"/><line x1="0" y1="318.5" x2="196" y2="318.5"/><line x1="0" y1="325.5" x2="196" y2="325.5"/><line x1="0" y1="331.5" x2="196" y2="331.5"/><line x1="0" y1="338.5" x2="196" y2="338.5"/><line x1="0" y1="344.5" x2="196" y2="344.5"/><line x1="0" y1="351.5" x2="196" y2="351.5"/><line x1="0" y1="357.5" x2="196" y2="357.5"/><line x1="0" y1="364.5" x2="196" y2="364.5"/><line x1="0" y1="370.5" x2="196" y2="370.5"/><line x1="0" y1="377.5" x2="196" y2="377.5"/><line x1="0" y1="383.5" x2="196" y2="383.5"/><line x1="0" y1="390.5" x2="196" y2="390.5"/><line x1="0" y1="397.5" x2="196" y2="397.5"/><line x1="0" y1="403.5" x2="196" y2="403.5"/><line x1="0" y1="410.5" x2="196" y2="410.5"/><line x1="0" y1="416.5" x2="196" y2="416.5"/><line x1="0" y1="423.5" x2="196" y2="423.5"/><line x1="0" y1="429.5" x2="196" y2="429.5"/><line x1="0" y1="436.5" x2="196" y2="436.5"/><line x1="0" y1="442.5" x2="196" y2="442.5"/><line x1="0" y1="449.5" x2="196" y2="449.5"/><line x1="0" y1="455.5" x2="196" y2="455.5"/><line x1="0" y1="462.5" x2="196" y2="462.5"/><line x1="0" y1="468.5" x2="196" y2="468.5"/><line x1="0" y1="475.5" x2="196" y2="475.5"/></g><line x1="98.5" y1="0" x2="98.5" y2="478" stroke="#a3a3a3" stroke-width="1.6"/><line x1="0" y1="305.5" x2="196" y2="305.5" stroke="#a3a3a3" stroke-width="1.6"/><ellipse cx="100" cy="291.3" rx="22" ry="12.5" fill="#ffff00"/><ellipse cx="100" cy="291.3" rx="14.5" ry="6.5" fill="#ffffff"/></svg>
<div class="a" style="left:393px;top:138px;width:26px;height:26px;border:1px solid #bdbdbd;box-shadow:0 0 0 1px rgba(150,150,150,0.5);border-radius:2px;background:#dcdcdc"></div>
<svg class="a" style="left:393px;top:138px" width="26" height="26" viewBox="0 0 26 26"><path d="M8 4 L22 17" stroke="#333" stroke-width="2"/><path d="M9 4 C5 6 5 12 3 15" fill="none" stroke="#2a9be0" stroke-width="1"/><path d="M2 19 C5 15.5 10 15.5 13 19 C10 22.5 5 22.5 2 19Z" fill="#fff" stroke="#111" stroke-width="1.2"/><circle cx="7.5" cy="19" r="2" fill="#111"/></svg>
<div class="a" style="left:393px;top:167px;width:26px;height:26px;border:1px solid #bdbdbd;box-shadow:0 0 0 1px rgba(150,150,150,0.5);border-radius:2px;background:#dcdcdc"></div>
<svg class="a" style="left:393px;top:167px" width="26" height="26" viewBox="0 0 26 26"><path d="M5 6 L10 3 C11 5 14 5 15 3 L20 6 L21 11 L18 11 V21 H7 V11 H4Z" fill="#fafafa" stroke="#ccc" stroke-width="0.6"/><path d="M2 20 C5 16.5 10 16.5 13 20 C10 23.5 5 23.5 2 20Z" fill="#fff" stroke="#111" stroke-width="1.2"/><circle cx="7.5" cy="20" r="2" fill="#111"/></svg>
<div class="a" style="left:393px;top:196px;width:26px;height:26px;border:1px solid #bdbdbd;box-shadow:0 0 0 1px rgba(150,150,150,0.5);border-radius:2px;background:#dcdcdc"></div>
<svg class="a" style="left:393px;top:196px" width="26" height="26" viewBox="0 0 26 26"><circle cx="14" cy="11" r="8" fill="#333"/><text x="14" y="16" font-family="Liberation Serif" font-style="italic" font-weight="bold" font-size="13" text-anchor="middle" fill="#2bb5ef">i</text><path d="M2 19 C5 15.5 10 15.5 13 19 C10 22.5 5 22.5 2 19Z" fill="#fff" stroke="#111" stroke-width="1.2"/><circle cx="7.5" cy="19" r="2" fill="#111"/></svg>
<div class="a" style="left:393px;top:225px;width:26px;height:26px;border:1px solid #bdbdbd;box-shadow:0 0 0 1px rgba(150,150,150,0.5);border-radius:2px;background:#dcdcdc"></div>
<svg class="a" style="left:393px;top:225px" width="26" height="26" viewBox="0 0 26 26"><path d="M5 9 L9 7 L19 4 L22 8 L19 19 L9 21 L4 20Z" fill="#f4f4f4" stroke="#888" stroke-width="0.8"/><path d="M9 8 L11 20 M13 6 L15 19 M17 5 L18 18 M6 12 L21 9 M6 16 L20 13" stroke="#aaa" stroke-width="0.6"/></svg>
<div class="a" style="left:585px;top:62px;width:509px;height:547px;background:#1a1a1a;"></div>
<div class="a" style="left:586px;top:62px;width:507px;height:546px;background:#2a2a2a;"></div>
<div class="a t" style="left:632px;top:67.0px;font-size:12.3px;color:#e4e4e4;">Particle Distance (mm)</div>
<div class="a t" style="left:960px;top:67.0px;font-size:12.3px;color:#e4e4e4;">20,0</div>
<svg class="a" style="left:1043px;top:66.5px" width="15" height="15" viewBox="0 0 15 15"><path d="M4.8 9.2 L10 4" stroke="#7a7a7a" stroke-width="2.1"/><path d="M13.77 2.42 A2.4 2.4 0 1 1 11.78 0.43" fill="none" stroke="#7a7a7a" stroke-width="2.3"/><path d="M1.03 10.98 A2.4 2.4 0 1 1 3.02 12.97" fill="none" stroke="#7a7a7a" stroke-width="2.3"/></svg>
<div class="a" style="left:632px;top:86px;width:432px;height:1px;background:#1d1d1d"></div>
<div class="a t" style="left:632px;top:94.5px;font-size:12.3px;color:#e4e4e4;">Layer</div>
<div class="a t" style="left:960px;top:94.5px;font-size:12.3px;color:#e4e4e4;">0</div>
<svg class="a" style="left:1043px;top:94px" width="15" height="15" viewBox="0 0 15 15"><path d="M4.8 9.2 L10 4" stroke="#7a7a7a" stroke-width="2.1"/><path d="M13.77 2.42 A2.4 2.4 0 1 1 11.78 0.43" fill="none" stroke="#7a7a7a" stroke-width="2.3"/><path d="M1.03 10.98 A2.4 2.4 0 1 1 3.02 12.97" fill="none" stroke="#7a7a7a" stroke-width="2.3"/></svg>
<div class="a" style="left:632px;top:114px;width:432px;height:1px;background:#1d1d1d"></div>
<div class="a t" style="left:632px;top:122.5px;font-size:12.3px;color:#e4e4e4;">Shrinkage Weft (%)</div>
<div class="a t" style="left:960px;top:122.5px;font-size:12.3px;color:#e4e4e4;">100,00</div>
<svg class="a" style="left:1043px;top:122px" width="15" height="15" viewBox="0 0 15 15"><path d="M4.8 9.2 L10 4" stroke="#7a7a7a" stroke-width="2.1"/><path d="M13.77 2.42 A2.4 2.4 0 1 1 11.78 0.43" fill="none" stroke="#7a7a7a" stroke-width="2.3"/><path d="M1.03 10.98 A2.4 2.4 0 1 1 3.02 12.97" fill="none" stroke="#7a7a7a" stroke-width="2.3"/></svg>
<div class="a" style="left:632px;top:142px;width:432px;height:1px;background:#1d1d1d"></div>
<div class="a t" style="left:632px;top:150.5px;font-size:12.3px;color:#e4e4e4;">Shrinkage Warp (%)</div>
<div class="a t" style="left:960px;top:150.5px;font-size:12.3px;color:#e4e4e4;">100,00</div>
<svg class="a" style="left:1043px;top:150px" width="15" height="15" viewBox="0 0 15 15"><path d="M4.8 9.2 L10 4" stroke="#7a7a7a" stroke-width="2.1"/><path d="M13.77 2.42 A2.4 2.4 0 1 1 11.78 0.43" fill="none" stroke="#7a7a7a" stroke-width="2.3"/><path d="M1.03 10.98 A2.4 2.4 0 1 1 3.02 12.97" fill="none" stroke="#7a7a7a" stroke-width="2.3"/></svg>
<div class="a" style="left:632px;top:170px;width:432px;height:1px;background:#1d1d1d"></div>
<div class="a t" style="left:632px;top:178.5px;font-size:12.3px;color:#e4e4e4;">Add'l Thickness - Collision (mm)</div>
<div class="a t" style="left:960px;top:178.5px;font-size:12.3px;color:#e4e4e4;">2,5</div>
<svg class="a" style="left:1043px;top:178px" width="15" height="15" viewBox="0 0 15 15"><path d="M4.8 9.2 L10 4" stroke="#7a7a7a" stroke-width="2.1"/><path d="M13.77 2.42 A2.4 2.4 0 1 1 11.78 0.43" fill="none" stroke="#7a7a7a" stroke-width="2.3"/><path d="M1.03 10.98 A2.4 2.4 0 1 1 3.02 12.97" fill="none" stroke="#7a7a7a" stroke-width="2.3"/></svg>
<div class="a" style="left:632px;top:198px;width:432px;height:1px;background:#1d1d1d"></div>
<div class="a t" style="left:632px;top:206.5px;font-size:12.3px;color:#e4e4e4;">Add'l Thickness - Rendering (mm)</div>
<div class="a t" style="left:960px;top:206.5px;font-size:12.3px;color:#e4e4e4;">0,0</div>
<svg class="a" style="left:1043px;top:206px" width="15" height="15" viewBox="0 0 15 15"><path d="M4.8 9.2 L10 4" stroke="#7a7a7a" stroke-width="2.1"/><path d="M13.77 2.42 A2.4 2.4 0 1 1 11.78 0.43" fill="none" stroke="#7a7a7a" stroke-width="2.3"/><path d="M1.03 10.98 A2.4 2.4 0 1 1 3.02 12.97" fill="none" stroke="#7a7a7a" stroke-width="2.3"/></svg>
<div class="a" style="left:632px;top:226px;width:432px;height:1px;background:#1d1d1d"></div>
<div class="a" style="left:620px;top:246px;width:0;height:0;border-top:5px solid transparent;border-bottom:5px solid transparent;border-left:6px solid #c4c4c4"></div>
<div class="a t" style="left:632px;top:244.5px;font-size:12.3px;color:#e4e4e4;">Pressure</div>
<div class="a t" style="left:961px;top:233.5px;font-size:12.3px;color:#e4e4e4;">0</div>
<svg class="a" style="left:1042px;top:233px" width="15" height="15" viewBox="0 0 15 15"><path d="M4.8 9.2 L10 4" stroke="#7a7a7a" stroke-width="2.1"/><path d="M13.77 2.42 A2.4 2.4 0 1 1 11.78 0.43" fill="none" stroke="#7a7a7a" stroke-width="2.3"/><path d="M1.03 10.98 A2.4 2.4 0 1 1 3.02 12.97" fill="none" stroke="#7a7a7a" stroke-width="2.3"/></svg>
<div class="a" style="left:958px;top:261px;width:48px;height:3px;background:#8d8d8d;"></div>
<div class="a" style="left:1011px;top:261px;width:47px;height:3px;background:#3d3d3d;"></div>
<svg class="a" style="left:1005px;top:257px" width="7" height="11" viewBox="0 0 7 11"><path d="M0.5 3 L3.5 0.5 L6.5 3 V10.5 H0.5Z" fill="#d4d4d4" stroke="#999" stroke-width="0.6"/></svg>
<div class="a" style="left:632px;top:273px;width:432px;height:1px;background:#1d1d1d"></div>
<div class="a" style="left:598px;top:285px;width:0;height:0;border-left:5px solid transparent;border-right:5px solid transparent;border-top:7px solid #c4c4c4"></div>
<div class="a t" style="left:613px;top:282.0px;font-size:12.3px;color:#5aafe3;">Fabric</div>
<div class="a" style="left:612px;top:301px;width:452px;height:1px;background:#1d1d1d"></div>
<div class="a t" style="left:632px;top:308.0px;font-size:12.3px;color:#e4e4e4;">Fabric</div>
<div class="a" style="left:958px;top:304px;width:106px;height:21px;background:#1e1e20;border-left:1px solid #111;border-top:1px solid #161616"></div>
<div class="a" style="left:1047px;top:306px;width:16px;height:17px;background:#2f2f2f;border-radius:2px"></div>
<div class="a" style="left:1052px;top:312.0px;width:0;height:0;border-left:4px solid transparent;border-right:4px solid transparent;border-top:6px solid #808080"></div>

<div class="a" style="left:964px;top:306px;width:20px;height:17px;background:#ffffff;"></div>
<div class="a t" style="left:991.5px;top:307.5px;font-size:12.3px;color:#e6e6e6;transform:scaleX(0.86);transform-origin:0 0">FABRIC 1</div>
<div class="a" style="left:632px;top:325px;width:432px;height:1px;background:#1d1d1d"></div>
<div class="a t" style="left:632px;top:334.0px;font-size:12.3px;color:#e4e4e4;">Grain Direction</div>
<div class="a t" style="left:960px;top:334.0px;font-size:12.3px;color:#e4e4e4;">0,0</div>
<svg class="a" style="left:1043px;top:334px" width="15" height="15" viewBox="0 0 15 15"><path d="M4.8 9.2 L10 4" stroke="#7a7a7a" stroke-width="2.1"/><path d="M13.77 2.42 A2.4 2.4 0 1 1 11.78 0.43" fill="none" stroke="#7a7a7a" stroke-width="2.3"/><path d="M1.03 10.98 A2.4 2.4 0 1 1 3.02 12.97" fill="none" stroke="#7a7a7a" stroke-width="2.3"/></svg>
<div class="a" style="left:632px;top:353px;width:432px;height:1px;background:#1d1d1d"></div>
<div class="a" style="left:600px;top:363px;width:0;height:0;border-top:5px solid transparent;border-bottom:5px solid transparent;border-left:6px solid #c4c4c4"></div>
<div class="a t" style="left:613px;top:362.0px;font-size:12.3px;color:#5aafe3;">Bond/Skive</div>
<div class="a" style="left:612px;top:381px;width:452px;height:1px;background:#1d1d1d"></div>
<div class="a t" style="left:613px;top:390.0px;font-size:12.3px;color:#e4e4e4;">Solidify</div>
<div class="a" style="left:612px;top:409px;width:452px;height:1px;background:#1d1d1d"></div>
<div class="a" style="left:964px;top:391px;width:11px;height:11px;background:linear-gradient(#7a7a7a,#555);border:1px solid #8a8a8a"></div>
<div class="a t" style="left:982.5px;top:390px;font-size:12.3px;color:#e4e4e4;">Off</div>
<div class="a" style="left:598px;top:421px;width:0;height:0;border-left:5px solid transparent;border-right:5px solid transparent;border-top:7px solid #c4c4c4"></div>
<div class="a t" style="left:613px;top:418.0px;font-size:12.3px;color:#5aafe3;">Arrangement</div>
<div class="a" style="left:612px;top:437px;width:452px;height:1px;background:#1d1d1d"></div>
<div class="a t" style="left:632px;top:446.0px;font-size:12.3px;color:#e4e4e4;">Point Name</div>
<div class="a" style="left:958px;top:442px;width:106px;height:21px;background:#1e1e20;border-left:1px solid #111;border-top:1px solid #161616"></div>
<div class="a" style="left:1047px;top:444px;width:16px;height:17px;background:#2f2f2f;border-radius:2px"></div>
<div class="a" style="left:1052px;top:450.0px;width:0;height:0;border-left:4px solid transparent;border-right:4px solid transparent;border-top:6px solid #808080"></div>

<div class="a t" style="left:963.5px;top:446px;font-size:12.3px;color:#e4e4e4;">not assigned</div>
<div class="a" style="left:632px;top:465px;width:432px;height:1px;background:#1d1d1d"></div>
<div class="a" style="left:598px;top:477.5px;width:0;height:0;border-left:5px solid transparent;border-right:5px solid transparent;border-top:7px solid #c4c4c4"></div>
<div class="a t" style="left:613px;top:474.0px;font-size:12.3px;color:#5aafe3;">Miscellaneous</div>
<div class="a" style="left:612px;top:493px;width:452px;height:1px;background:#1d1d1d"></div>
<div class="a t" style="left:632px;top:502.0px;font-size:12.3px;color:#e4e4e4;">Mesh Type</div>
<div class="a" style="left:958px;top:498px;width:106px;height:21px;background:#1e1e20;border-left:1px solid #111;border-top:1px solid #161616"></div>
<div class="a" style="left:1047px;top:500px;width:16px;height:17px;background:#2f2f2f;border-radius:2px"></div>
<div class="a" style="left:1052px;top:506.0px;width:0;height:0;border-left:4px solid transparent;border-right:4px solid transparent;border-top:6px solid #808080"></div>

<div class="a t" style="left:963px;top:502px;font-size:12.3px;color:#e4e4e4;">Quad</div>
<div class="a" style="left:632px;top:521px;width:432px;height:1px;background:#1d1d1d"></div>
<div class="a t" style="left:632px;top:530.0px;font-size:12.3px;color:#e4e4e4;">Face Count</div>
<div class="a t" style="left:960px;top:530.0px;font-size:12.3px;color:#e4e4e4;">715</div>
<div class="a" style="left:632px;top:549px;width:432px;height:1px;background:#1d1d1d"></div>
<div class="a t" style="left:632px;top:558.0px;font-size:12.3px;color:#e4e4e4;">Vertex Count</div>
<div class="a t" style="left:960px;top:558.0px;font-size:12.3px;color:#e4e4e4;">803</div>
<div class="a" style="left:632px;top:577px;width:432px;height:1px;background:#1d1d1d"></div>
<div class="a t" style="left:594px;top:586.0px;font-size:12.3px;color:#e4e4e4;">Remesh (Beta)</div>
<div class="a" style="left:612px;top:605px;width:452px;height:1px;background:#1d1d1d"></div>
<div class="a" style="left:964px;top:587px;width:11px;height:11px;background:linear-gradient(#7a7a7a,#555);border:1px solid #8a8a8a"></div>
<svg class="a" style="left:964px;top:587px" width="12" height="12" viewBox="0 0 12 12"><path d="M2.2 5.8 L4.8 8.5 L10 2.5" fill="none" stroke="#4cc0f5" stroke-width="2"/></svg>
<div class="a t" style="left:982.5px;top:586px;font-size:12.3px;color:#e4e4e4;">On</div>
<svg class="a" style="left:1036px;top:502px" width="13" height="20" viewBox="0 0 13 20"><path d="M1 1 V15.5 L4.5 12.2 L7.3 18.5 L9.6 17.5 L6.9 11.4 H11.5Z" fill="#fff" stroke="#000" stroke-width="1"/></svg>
<div class="a" style="left:1076px;top:80px;width:17px;height:527px;background:#202020;"></div>
<div class="a" style="left:1076px;top:64px;width:16px;height:16px;background:#333;border-radius:3px;border:1px solid #2a2a2a"></div>
<div class="a" style="left:1080px;top:69px;width:0;height:0;border-left:4px solid transparent;border-right:4px solid transparent;border-bottom:6px solid #1a1a1a"></div>
<div class="a" style="left:1076px;top:282px;width:17px;height:307px;background:#2c2c2c;border-radius:3px;border:1px solid #262626"></div>
<div class="a" style="left:1076px;top:591px;width:16px;height:16px;background:#2f2f2f;border-radius:3px;border:1px solid #262626"></div>
<div class="a" style="left:1080px;top:596px;width:0;height:0;border-left:4px solid transparent;border-right:4px solid transparent;border-top:6px solid #1a1a1a"></div>
<div class="a t" style="left:15px;top:614.5px;font-size:10.6px;color:#d8d8d8;transform:scaleX(0.92);transform-origin:0 0">Version: 5.1.290 (r43646)</div>
<div class="a" style="left:989px;top:615px;width:19px;height:15px;border:2px solid #555"></div>
<div class="a" style="left:998px;top:615px;width:2px;height:15px;background:#555;"></div>
<div class="a" style="left:1020px;top:615px;width:19px;height:15px;border:2px solid #555"></div>
<div class="a t" style="left:1022px;top:616px;font-size:10px;color:#666;font-weight:bold">3D</div>
<div class="a" style="left:1051px;top:615px;width:19px;height:15px;border:2px solid #555"></div>
<div class="a t" style="left:1053px;top:616px;font-size:10px;color:#666;font-weight:bold">2D</div>
<div class="a" style="left:1082px;top:617px;width:1px;height:11px;background:#383838;"></div>
<div class="a" style="left:1093px;top:615px;width:17px;height:15px;background:#2f2f2f;border:1px solid #292929"></div>
<svg class="a" style="left:1095px;top:616px" width="13" height="13" viewBox="0 0 13 13"><path d="M10 5 A4.3 4.3 0 1 0 10.3 8" fill="none" stroke="#8a8a8a" stroke-width="2"/><path d="M7 2 L11.8 1.5 L11.5 6.5Z" fill="#8a8a8a"/></svg>
</body></html>
